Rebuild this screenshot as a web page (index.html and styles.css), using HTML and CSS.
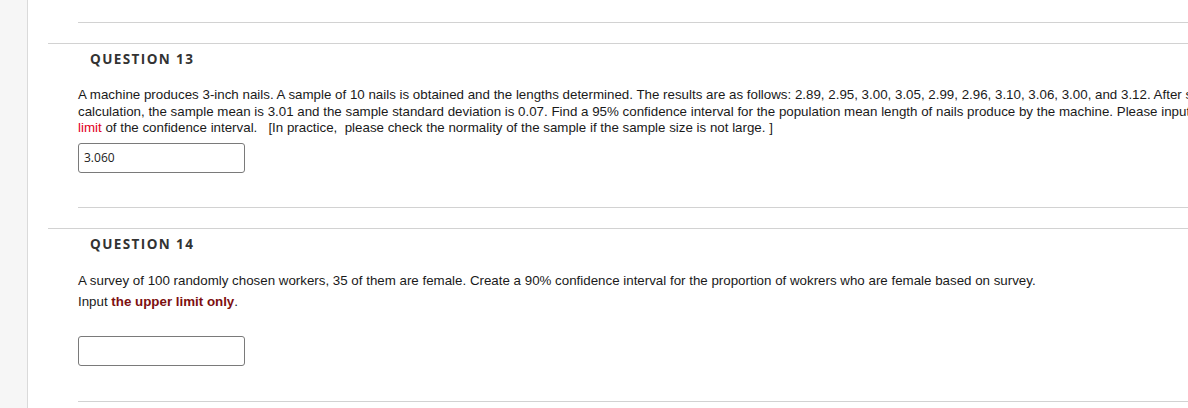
FILE: index.html
```html
<!DOCTYPE html>
<html>
<head>
<meta charset="utf-8">
<link rel="stylesheet" href="styles.css">
</head>
<body>
<div class="sidebar"></div>
<main class="main">
  <div class="prev-end"><div class="rule"></div></div>

  <section class="question">
    <h3 class="q-title">QUESTION 13</h3>
    <div class="q-body">
      <p class="q-text q13-text">A machine produces 3-inch nails. A sample of 10 nails is obtained and the lengths determined. The results are as follows: 2.89, 2.95, 3.00, 3.05, 2.99, 2.96, 3.10, 3.06, 3.00, and 3.12. After some<br>calculation, the sample mean is 3.01 and the sample standard deviation is 0.07. Find a 95% confidence interval for the population mean length of nails produce by the machine. Please input <span class="red">the upper</span><br><span class="red">limit</span> of the confidence interval.&nbsp;&nbsp; [In practice,&nbsp; please check the normality of the sample if the sample size is not large. ]</p>
      <div class="answer q13-answer"><input class="answer-input" type="text" value="3.060"></div>
      <div class="rule"></div>
    </div>
  </section>

  <section class="question">
    <h3 class="q-title">QUESTION 14</h3>
    <div class="q-body">
      <p class="q-text q14-text">A survey of 100 randomly chosen workers, 35 of them are female. Create a 90% confidence interval for the proportion of wokrers who are female based on survey.</p>
      <p class="q-text q14-line2">Input <strong class="dark-red">the upper limit only</strong>.</p>
      <div class="answer q14-answer"><input class="answer-input" type="text" value=""></div>
      <div class="rule"></div>
    </div>
  </section>
</main>
</body>
</html>
```

FILE: styles.css
```css
html, body {
  margin: 0;
  padding: 0;
  background: #ffffff;
  height: 100%;
  overflow: hidden;
}

body {
  display: flex;
  align-items: stretch;
}

.sidebar {
  flex: 0 0 27px;
  background: #f6f6f6;
  border-right: 1px solid #dadada;
  min-height: 408px;
}

.main {
  flex: 1 1 auto;
  padding-left: 20px;
  overflow: hidden;
}

.prev-end {
  padding-left: 30px;
  height: 23px;
  display: flex;
  flex-direction: column;
  justify-content: flex-end;
}

.rule {
  height: 0;
  border-top: 1px solid #d2d2d2;
}

.question {
  border-top: 1px solid #d2d2d2;
  margin-top: 20px;
  width: 1300px;
  padding-top: 6px;
}

.question + .question {
  margin-top: 20px;
}

.q-title {
  margin: 0 0 0 42px;
  font-family: "Open Sans", sans-serif;
  font-weight: 700;
  font-size: 13.5px;
  letter-spacing: 1.4px;
  line-height: 18px;
  color: #333333;
}

.q-body {
  margin-left: 30px;
}

.q-text {
  margin: 19px 0 0 0;
  font-family: "Liberation Sans", Arial, sans-serif;
  font-size: 13.33px;
  line-height: 16.5px;
  color: #1a1a1a;
  width: 1200px;
}

.q13-text {
  white-space: nowrap;
}

.q14-text {
  margin-top: 20px;
}

.q14-line2 {
  margin-top: 5px;
}

.red {
  color: #e2001a;
}

.dark-red {
  color: #7d1010;
  font-weight: 700;
}

.answer {
  display: flex;
}

.q13-answer {
  margin-top: 6px;
  margin-bottom: 34px;
}

.q14-answer {
  margin-top: 25px;
  margin-bottom: 35px;
}

.answer-input {
  box-sizing: border-box;
  width: 167px;
  height: 30px;
  margin: 0;
  border: 1px solid #7a7a7a;
  border-radius: 3px;
  padding: 0 5px;
  font-family: "Open Sans", sans-serif;
  font-size: 12px;
  color: #222222;
  background: #ffffff;
  outline: none;
}
```
